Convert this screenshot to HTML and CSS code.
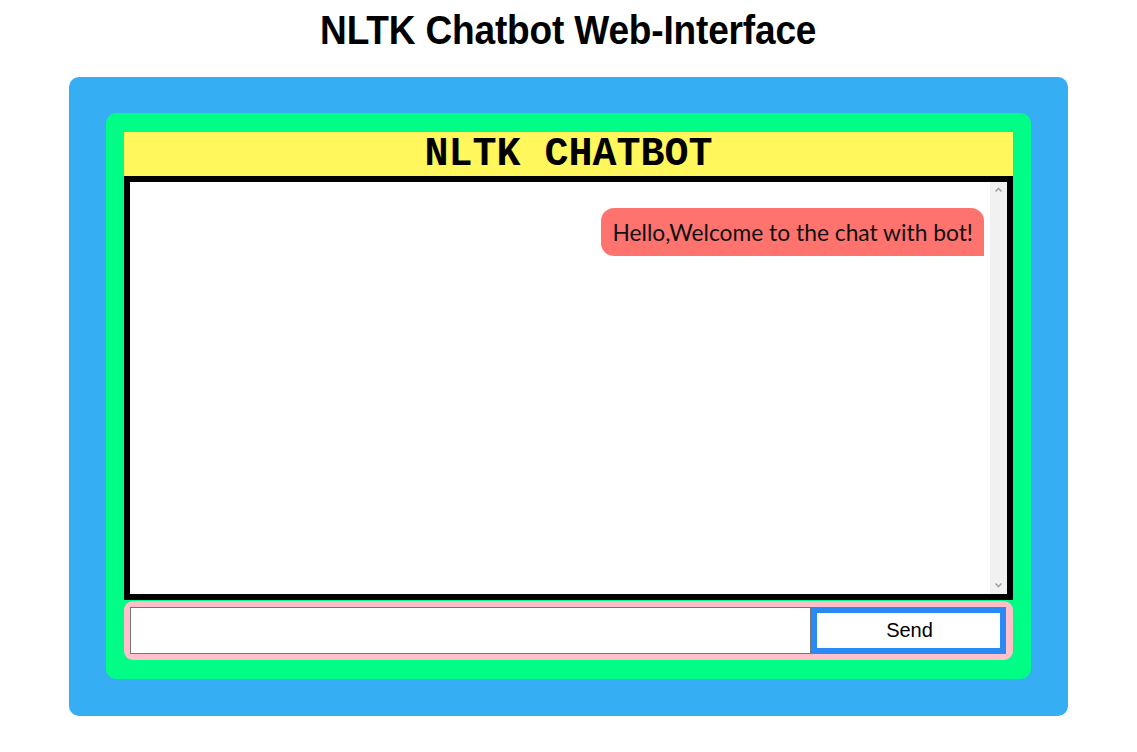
FILE: index.html
```html
<!DOCTYPE html>
<html lang="en">
<head>
<meta charset="utf-8">
<title>NLTK Chatbot</title>
<link rel="stylesheet" href="styles.css">
</head>
<body>
<h1 class="title"><span class="title-text">NLTK Chatbot Web-Interface</span></h1>
<div class="outer">
  <div class="inner">
    <div class="header">NLTK CHATBOT</div>
    <div class="chatbox">
      <div class="messages">
        <div class="msg-row">
          <div class="bubble">Hello,Welcome to the chat with bot!</div>
        </div>
      </div>
      <div class="scrollbar">
        <svg class="arrow" width="17" height="17" viewBox="0 0 17 17"><path d="M5.5 9.5 L8.5 6.5 L11.5 9.5" fill="none" stroke="#a3a3a3" stroke-width="1.6"/></svg>
        <svg class="arrow" width="17" height="17" viewBox="0 0 17 17"><path d="M5.5 6.5 L8.5 9.5 L11.5 6.5" fill="none" stroke="#a3a3a3" stroke-width="1.6"/></svg>
      </div>
    </div>
    <div class="input-row">
      <input class="text-input" type="text">
      <button class="send">Send</button>
    </div>
  </div>
</div>
</body>
</html>
```

FILE: styles.css
```css
html, body {
  background: #ffffff;
}
body {
  margin: 8px;
  font-family: "Liberation Sans", Arial, sans-serif;
}
.title {
  margin: 0;
  height: 69px;
  text-align: center;
  font-family: "Liberation Sans", Arial, sans-serif;
  font-weight: bold;
  font-size: 40.5px;
  line-height: 44px;
  color: #000;
}
.title-text {
  display: inline-block;
  transform: scaleX(0.915);
  transform-origin: center;
  letter-spacing: -0.2px;
}
.outer {
  width: 999px;
  margin: 0 auto;
  box-sizing: border-box;
  padding: 36px 37px 37px;
  background: #35aef3;
  border-radius: 10px;
}
.inner {
  background: #00fd86;
  border-radius: 10px;
  padding: 19px 18px 19px 18px;
  display: flex;
  flex-direction: column;
}
.header {
  height: 44px;
  background: #fff75b;
  text-align: center;
  font-family: "Liberation Mono", "Courier New", monospace;
  font-weight: bold;
  font-size: 40px;
  line-height: 46px;
  color: #000;
}
.chatbox {
  height: 412px;
  border: 6px solid #000;
  background: #fff;
  margin-bottom: 1px;
  display: flex;
}
.messages {
  flex: 1;
  min-width: 0;
}
.scrollbar {
  width: 17px;
  background: #f1f1f1;
  display: flex;
  flex-direction: column;
  justify-content: space-between;
}
.arrow {
  display: block;
}
.msg-row {
  display: flex;
  justify-content: flex-end;
  padding: 26px 6px 0 0;
}
.bubble {
  background: #ff736f;
  border-radius: 13px 13px 0 13px;
  padding: 0 11px;
  height: 48px;
  line-height: 48px;
  font-family: "Lato", "Open Sans", sans-serif;
  font-size: 22.8px;
  color: #111;
}
.input-row {
  display: flex;
  background: #ffc0cb;
  border-radius: 9px;
  padding: 6px;
  height: 47px;
}
.text-input {
  width: 681px;
  box-sizing: border-box;
  height: 47px;
  border: 1px solid #767676;
  margin: 0;
  padding: 0 4px;
  background: #fff;
  font-size: 18px;
}
.send {
  width: 195px;
  box-sizing: border-box;
  height: 47px;
  margin: 0;
  border: 6px solid #2a8af3;
  background: #fff;
  font-family: "Liberation Sans", Arial, sans-serif;
  font-size: 20px;
  color: #000;
  padding: 0 0 0 2px;
}
```
